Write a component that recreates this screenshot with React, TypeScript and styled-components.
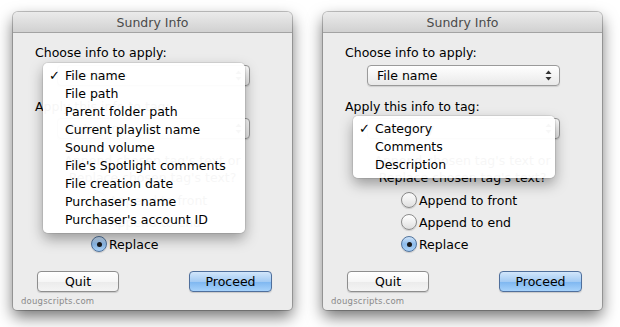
import styled, { createGlobalStyle } from "styled-components";

const Global = createGlobalStyle`
  html, body {
    margin: 0;
    background: #ffffff;
  }
  body {
    font-family: "DejaVu Sans", "Liberation Sans", sans-serif;
    -webkit-font-smoothing: antialiased;
  }
`;

const Page = styled.div`
  display: flex;
  gap: 31px;
  padding: 12px 0 0 13px;
  width: 620px;
  height: 327px;
  box-sizing: border-box;
  overflow: hidden;
`;

const Window = styled.div`
  width: 279px;
  height: 298px;
  display: flex;
  flex-direction: column;
  border-radius: 5px 5px 4px 4px;
  background: #ececec;
  box-shadow: 0 7px 16px rgba(0, 0, 0, 0.55), 0 0 0 1px rgba(0, 0, 0, 0.22);
  flex-shrink: 0;
`;

const TitleBar = styled.div`
  height: 21px;
  flex-shrink: 0;
  display: flex;
  align-items: center;
  justify-content: center;
  border-radius: 5px 5px 0 0;
  background: linear-gradient(#ebebeb, #d1d1d1);
  border-bottom: 1px solid #a3a3a3;
  box-sizing: border-box;
  color: #4a4a4a;
  font-size: 12.5px;
`;

const Body = styled.div`
  flex: 1;
  display: flex;
  flex-direction: column;
  padding: 12px 0 0 0;
  position: relative;
`;

const Label = styled.div<{ $top?: number }>`
  font-size: 12.5px;
  color: #000;
  padding-left: 22px;
  line-height: 16px;
  margin-top: ${({ $top }) => $top ?? 0}px;
`;

const PopupWrap = styled.div<{ $top: number }>`
  position: relative;
  margin: ${({ $top }) => $top}px 0 0 44px;
  width: 193px;
`;

const Popup = styled.div`
  height: 21px;
  box-sizing: border-box;
  border: 1px solid #9a9a9a;
  border-radius: 4px;
  background: linear-gradient(#ffffff, #f4f4f4 50%, #e9e9e9);
  box-shadow: 0 1px 1px rgba(0, 0, 0, 0.12);
  display: flex;
  align-items: center;
  justify-content: space-between;
  padding: 0 7px 0 9px;
  font-size: 12.5px;
  color: #000;
`;

const Menu = styled.div`
  position: absolute;
  left: -14px;
  top: -2px;
  width: 202px;
  padding: 3px 0 5px;
  border-radius: 5px;
  background: rgba(255, 255, 255, 0.965);
  box-shadow: 0 6px 14px rgba(0, 0, 0, 0.35), 0 0 0 1px rgba(0, 0, 0, 0.08);
  z-index: 5;
`;

const MenuItem = styled.div`
  display: flex;
  align-items: center;
  height: 18px;
  font-size: 12.5px;
  color: #000;
`;

const Check = styled.span`
  width: 22px;
  padding-left: 6px;
  box-sizing: border-box;
  font-size: 13px;
  font-weight: bold;
`;

const Question = styled.div`
  margin-top: 13px;
  text-align: center;
  font-size: 12.5px;
  line-height: 17px;
  color: #000;
`;

const Radios = styled.div`
  display: flex;
  flex-direction: column;
  gap: 6px;
  margin: 6px 0 0 78px;
`;

const RadioRow = styled.div`
  display: flex;
  align-items: center;
  gap: 2px;
  font-size: 12.5px;
  height: 16px;
`;

const RadioDot = styled.span<{ $on?: boolean }>`
  width: 16px;
  height: 16px;
  box-sizing: border-box;
  border-radius: 50%;
  border: 1px solid ${({ $on }) => ($on ? "#51739c" : "#8c8c8c")};
  background: ${({ $on }) =>
    $on
      ? "linear-gradient(#cfe3f8, #8dbcec 50%, #a9d1f7)"
      : "linear-gradient(#ffffff, #f0f0f0 50%, #dedede)"};
  box-shadow: 0 1px 1px rgba(0, 0, 0, 0.15);
  display: flex;
  align-items: center;
  justify-content: center;
  &::after {
    content: "";
    display: ${({ $on }) => ($on ? "block" : "none")};
    width: 5px;
    height: 5px;
    border-radius: 50%;
    background: #1a1a1a;
  }
`;

const ButtonRow = styled.div`
  display: flex;
  justify-content: space-between;
  margin: 19px 20px 0 24px;
`;

const Button = styled.div<{ $primary?: boolean }>`
  width: ${({ $primary }) => ($primary ? 83 : 82)}px;
  height: 21px;
  box-sizing: border-box;
  border-radius: 4px;
  display: flex;
  align-items: center;
  justify-content: center;
  font-size: 12.5px;
  color: #000;
  border: 1px solid ${({ $primary }) => ($primary ? "#4f6f9c" : "#8e8e8e")};
  background: ${({ $primary }) =>
    $primary
      ? "linear-gradient(#d2e6fb, #a3cbf4 50%, #7db6f0 51%, #a6d2fb)"
      : "linear-gradient(#ffffff, #f6f6f6 50%, #ebebeb 51%, #f4f4f4)"};
  box-shadow: 0 1px 1px rgba(0, 0, 0, 0.15);
`;

const Footer = styled.div`
  margin: 4px 0 0 8px;
  font-size: 8.5px;
  color: #8a8a8a;
  letter-spacing: 0.2px;
`;

const Arrows = () => (
  <svg width="7" height="11" viewBox="0 0 7 11">
    <path d="M3.5 0.5 L6.5 4 L0.5 4 Z" fill="#333" />
    <path d="M3.5 10.5 L6.5 7 L0.5 7 Z" fill="#333" />
  </svg>
);

const fileItems = [
  "File name",
  "File path",
  "Parent folder path",
  "Current playlist name",
  "Sound volume",
  "File's Spotlight comments",
  "File creation date",
  "Purchaser's name",
  "Purchaser's account ID",
];

const tagItems = ["Category", "Comments", "Description"];

function PopupMenu({ items }: { items: string[] }) {
  return (
    <Menu>
      {items.map((item, i) => (
        <MenuItem key={item}>
          <Check>{i === 0 ? "✓" : ""}</Check>
          {item}
        </MenuItem>
      ))}
    </Menu>
  );
}

function Dialog({ open }: { open: "file" | "tag" }) {
  return (
    <Window>
      <TitleBar>Sundry Info</TitleBar>
      <Body>
        <Label>Choose info to apply:</Label>
        <PopupWrap $top={4}>
          <Popup>
            <span>File name</span>
            <Arrows />
          </Popup>
          {open === "file" && <PopupMenu items={fileItems} />}
        </PopupWrap>
        <Label $top={13}>Apply this info to tag:</Label>
        <PopupWrap $top={3}>
          <Popup>
            <span>Category</span>
            <Arrows />
          </Popup>
          {open === "tag" && <PopupMenu items={tagItems} />}
        </PopupWrap>
        <Question>
          Append chosen tag's text or
          <br />
          Replace chosen tag's text?
        </Question>
        <Radios>
          <RadioRow>
            <RadioDot />
            Append to front
          </RadioRow>
          <RadioRow>
            <RadioDot />
            Append to end
          </RadioRow>
          <RadioRow>
            <RadioDot $on />
            Replace
          </RadioRow>
        </Radios>
        <ButtonRow>
          <Button>Quit</Button>
          <Button $primary>Proceed</Button>
        </ButtonRow>
        <Footer>dougscripts.com</Footer>
      </Body>
    </Window>
  );
}

export default function App() {
  return (
    <>
      <Global />
      <Page>
        <Dialog open="file" />
        <Dialog open="tag" />
      </Page>
    </>
  );
}
